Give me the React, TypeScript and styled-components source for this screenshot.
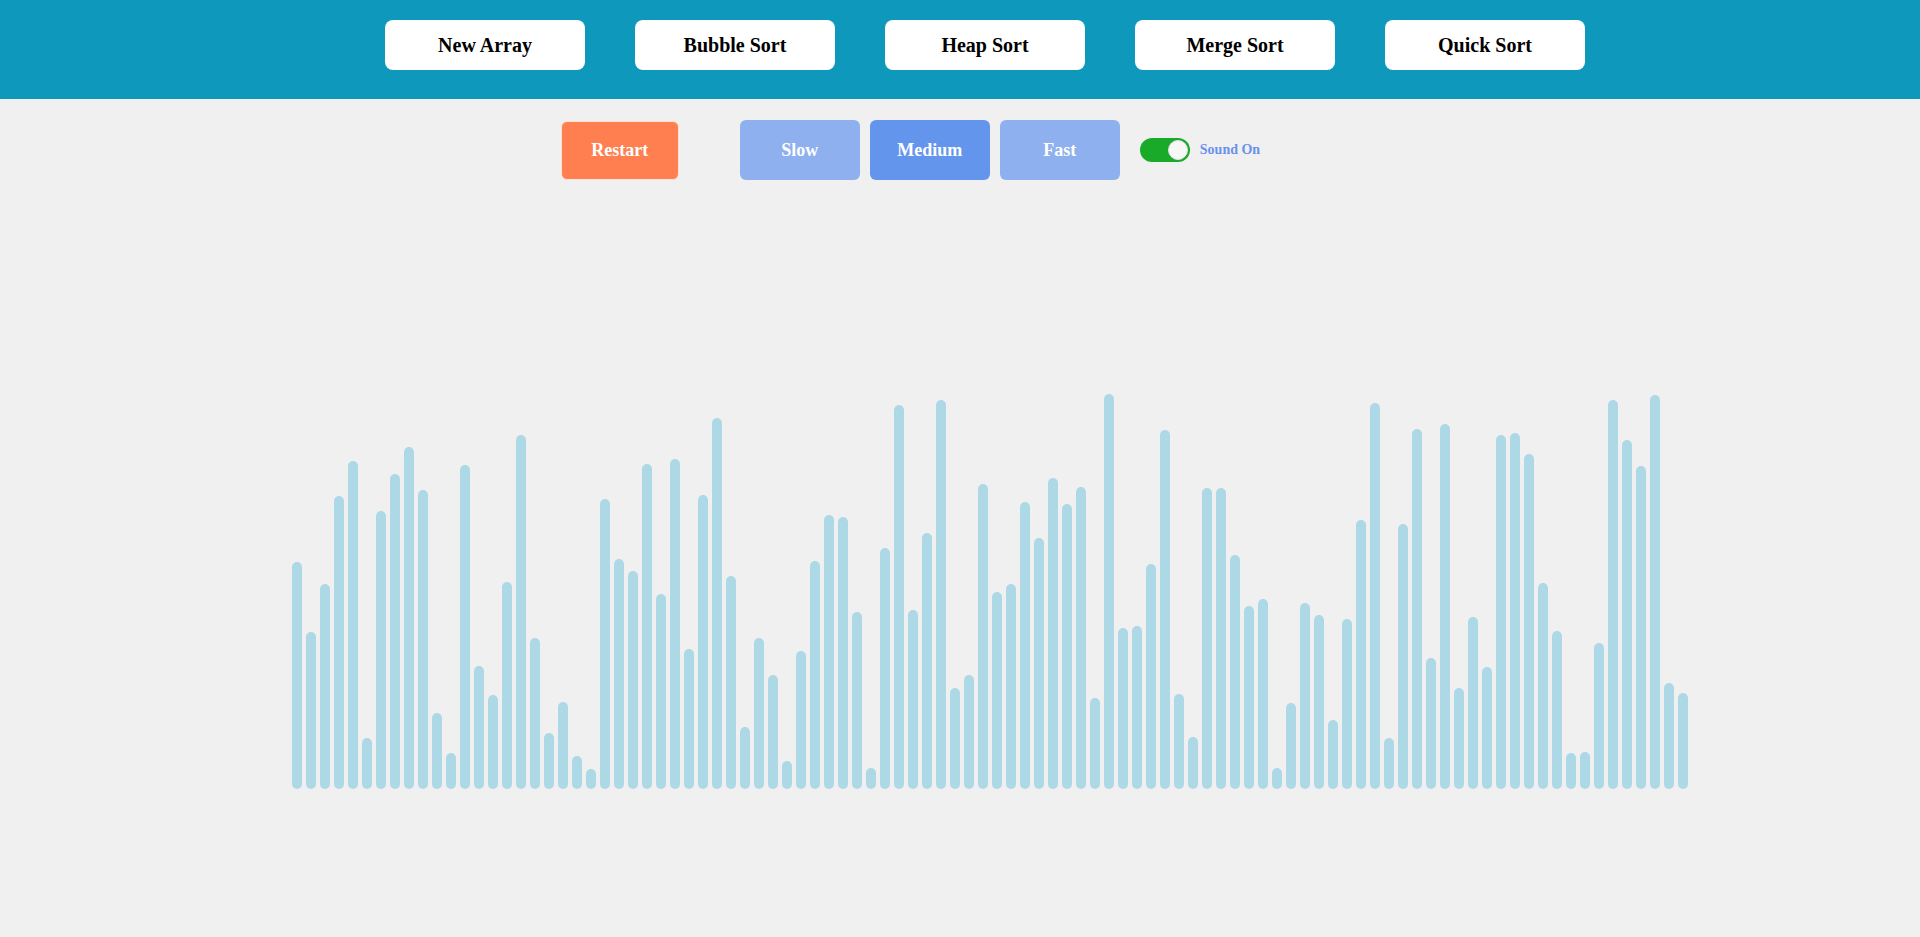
import React from "react";
import styled, { createGlobalStyle } from "styled-components";

const GlobalStyle = createGlobalStyle`
  html, body {
    margin: 0;
    padding: 0;
    background: #f0f0f0;
    font-family: "Liberation Serif", "Times New Roman", serif;
  }
  * { box-sizing: border-box; }
`;

const TOPS = [
  561, 631, 583, 495, 460, 737, 510, 473, 446, 489,
  712, 752, 464, 665, 694, 581, 434, 637, 732, 701,
  755, 768, 498, 558, 570, 463, 593, 458, 648, 494,
  417, 575, 726, 637, 674, 760, 650, 560, 514, 516,
  611, 767, 547, 404, 609, 532, 399, 687, 674, 483,
  591, 583, 501, 537, 477, 503, 486, 697, 393, 627,
  625, 563, 429, 693, 736, 487, 487, 554, 605, 598,
  767, 702, 602, 614, 719, 618, 519, 402, 737, 523,
  428, 657, 423, 687, 616, 666, 434, 432, 453, 582,
  630, 752, 751, 642, 399, 439, 465, 394, 682, 692,
];
const BOTTOM = 788;
const HEIGHTS = TOPS.map((t) => BOTTOM - t);

const Page = styled.div`
  min-height: 937px;
  background: #f0f0f0;
`;

const Header = styled.header`
  height: 99px;
  background: #0e98bb;
  display: flex;
  justify-content: center;
  align-items: flex-start;
  padding-top: 20px;
`;

const NavButton = styled.button`
  width: 200px;
  height: 50px;
  margin-left: 50px;
  border: none;
  border-radius: 8px;
  background: #ffffff;
  color: #000;
  font-family: "Liberation Serif", "Times New Roman", serif;
  font-weight: bold;
  font-size: 20px;
  cursor: pointer;
  padding: 0;
`;

const Controls = styled.div`
  display: flex;
  justify-content: center;
  align-items: center;
  padding-top: 21px;
  padding-right: 99px;
  height: 81px;
`;

const RestartButton = styled.button`
  width: 118px;
  height: 59px;
  margin-right: 61px;
  border: 1px solid #ffe2d6;
  border-radius: 6px;
  background: #ff7f50;
  color: #fff;
  font-family: "Liberation Serif", "Times New Roman", serif;
  font-weight: bold;
  font-size: 18px;
  padding: 0;
`;

const SpeedGroup = styled.div`
  display: flex;
  gap: 10px;
`;

const SpeedButton = styled.button<{ $active?: boolean }>`
  width: 120px;
  height: 60px;
  border: none;
  border-radius: 6px;
  background: ${(p) => (p.$active ? "#6495ed" : "#8eb0ee")};
  color: #fff;
  font-family: "Liberation Serif", "Times New Roman", serif;
  font-weight: bold;
  font-size: 18px;
  padding: 0;
`;

const SoundToggle = styled.div`
  display: flex;
  align-items: center;
  margin-left: 20px;
  gap: 10px;
`;

const Track = styled.div<{ $on?: boolean }>`
  width: 50px;
  height: 24px;
  border-radius: 12px;
  background: ${(p) => (p.$on ? "#1aaa2a" : "#ccc")};
  display: flex;
  align-items: center;
  justify-content: ${(p) => (p.$on ? "flex-end" : "flex-start")};
  padding: 0 2px;
`;

const Knob = styled.div`
  width: 20px;
  height: 20px;
  border-radius: 50%;
  background: #f7f7f7;
  border: 1px solid #e2e2e2;
`;

const SoundLabel = styled.span`
  color: #6a91eb;
  font-weight: bold;
  font-size: 14px;
  font-family: "Liberation Serif", "Times New Roman", serif;
`;

const BarArea = styled.div`
  height: 609px;
  display: flex;
  justify-content: center;
  align-items: flex-end;
  gap: 4px;
  padding-left: 60px;
`;

const Bar = styled.div`
  width: 10px;
  background: #add8e6;
  border-radius: 5px;
  flex-shrink: 0;
`;

const NAV = ["New Array", "Bubble Sort", "Heap Sort", "Merge Sort", "Quick Sort"];

export default function App() {
  return (
    <Page>
      <GlobalStyle />
      <Header>
        {NAV.map((n) => (
          <NavButton key={n}>{n}</NavButton>
        ))}
      </Header>
      <Controls>
        <RestartButton>Restart</RestartButton>
        <SpeedGroup>
          <SpeedButton>Slow</SpeedButton>
          <SpeedButton $active>Medium</SpeedButton>
          <SpeedButton>Fast</SpeedButton>
        </SpeedGroup>
        <SoundToggle>
          <Track $on>
            <Knob />
          </Track>
          <SoundLabel>Sound On</SoundLabel>
        </SoundToggle>
      </Controls>
      <BarArea>
        {HEIGHTS.map((h, i) => (
          <Bar key={i} style={{ height: h }} />
        ))}
      </BarArea>
    </Page>
  );
}
